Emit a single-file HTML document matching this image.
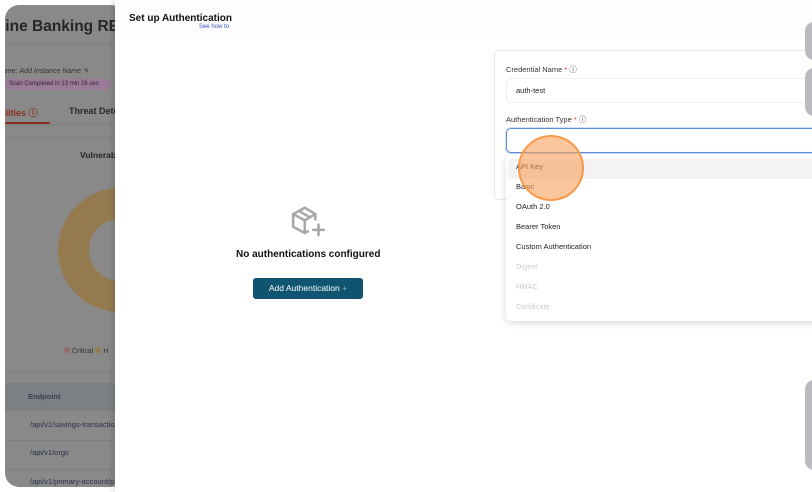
<!DOCTYPE html>
<html><head><style>
*{margin:0;padding:0;box-sizing:border-box}
body{width:812px;height:492px;background:#fff;position:relative;overflow:hidden;font-family:"Liberation Sans",sans-serif}
.a{position:absolute}
</style></head><body>
<div class="a" style="left:5px;top:5px;width:120px;height:482px;background:#898989;border-radius:14px;overflow:hidden">
  <div class="a" style="left:-4px;top:13px;font-size:15.5px;font-weight:bold;color:#262626;white-space:nowrap">line Banking RE</div>
  <div class="a" style="left:0;top:38px;width:120px;height:1px;background:#7e7e7e"></div>
  <div class="a" style="left:-3px;top:62px;font-size:7px;color:#333;white-space:nowrap">ame: <i>Add Instance Name ✎</i></div>
  <div class="a" style="left:0;top:74px;height:11px;width:106px;background:#9a7a98;border-radius:6px;font-size:6px;color:#2a2a2a;line-height:11px;padding-left:4px;white-space:nowrap">Scan Completed in 13 min 26 sec</div>
  <div class="a" style="left:-2px;top:101px;font-size:9px;font-weight:bold;color:#8a2f22;white-space:nowrap">ilities ⓘ</div>
  <div class="a" style="left:64px;top:101px;font-size:9px;font-weight:bold;color:#2a2a2a;white-space:nowrap">Threat Dete</div>
  <div class="a" style="left:0;top:117px;width:45px;height:2px;background:#8a2f22"></div>
  <div class="a" style="left:0;top:119px;width:120px;height:1px;background:#7e7e7e"></div>
  <div class="a" style="left:0;top:132px;width:120px;height:1px;background:#7e7e7e"></div>
  <div class="a" style="left:75px;top:145px;font-size:8.5px;font-weight:bold;color:#262626">Vulnerab</div>
  <div class="a" style="left:53px;top:183px;width:124px;height:124px;border-radius:50%;border:31px solid #957a4f"></div>
  <div class="a" style="left:59px;top:342px;font-size:7px;color:#333;white-space:nowrap"><span style="display:inline-block;width:6px;height:6px;border-radius:50%;background:#946a6a"></span> Critical <span style="display:inline-block;width:6px;height:6px;border-radius:50%;background:#957a4f"></span> H</div>
  <div class="a" style="left:0;top:367px;width:120px;height:1px;background:#7e7e7e"></div>
  <div class="a" style="left:0;top:378px;width:120px;height:28px;background:#7b8085"></div>
  <div class="a" style="left:23px;top:387px;font-size:7.5px;font-weight:bold;color:#3a4150">Endpoint</div>
  <div class="a" style="left:25px;top:415px;font-size:7.5px;color:#27304a;white-space:nowrap">/api/v1/savings-transactio</div>
  <div class="a" style="left:0;top:435px;width:120px;height:1px;background:#7e7e7e"></div>
  <div class="a" style="left:25px;top:443px;font-size:7.5px;color:#27304a">/api/v1/orgs</div>
  <div class="a" style="left:0;top:464px;width:120px;height:1px;background:#7e7e7e"></div>
  <div class="a" style="left:25px;top:472px;font-size:7.5px;color:#27304a;white-space:nowrap">/api/v1/primary-account/p</div>
</div>
<div class="a" style="left:115px;top:0;width:697px;height:492px;background:#fff;box-shadow:-2px 0 6px rgba(0,0,0,.15)">
  <div class="a" style="left:0;top:0;width:697px;height:36px;background:#fdfdfd"></div>
  <div class="a" style="left:14px;top:13px;font-size:10px;font-weight:bold;color:#111">Set up Authentication</div>
  <div class="a" style="left:84px;top:24px;font-size:6px;color:#3b55c9">See how to</div>
  <svg class="a" style="left:175px;top:204px" width="38" height="37" viewBox="0 0 36 34" fill="none" stroke="#a8a8a8" stroke-width="2.4" stroke-linejoin="round" stroke-linecap="round">
    <path d="M24 14V9L14 3 3 9v12l11 6 3-1.5"/><path d="M3 9l11 6 10-6"/><path d="M14 15v12"/><path d="M8.5 6l10 6"/><path d="M27 19v10M22 24h10"/>
  </svg>
  <div class="a" style="left:121px;top:249px;font-size:10px;font-weight:bold;color:#111;white-space:nowrap">No authentications configured</div>
  <div class="a" style="left:138px;top:278px;width:110px;height:21px;background:#0f5572;border-radius:3px;color:#fff;font-size:8.5px;line-height:21px;text-align:center">Add Authentication <span style="color:#9ab">+</span></div>
  <div class="a" style="left:379px;top:50px;width:330px;height:150px;border:1px solid #e6e6e6;border-radius:5px;background:#fff"></div>
  <div class="a" style="left:391px;top:64px;font-size:7.5px;color:#333">Credential Name <span style="color:#d33">*</span> ⓘ</div>
  <div class="a" style="left:391px;top:78px;width:320px;height:25px;border:1px solid #eee;border-radius:5px;font-size:7.5px;color:#222;line-height:23px;padding-left:9px">auth-test</div>
  <div class="a" style="left:391px;top:114px;font-size:7.5px;color:#333">Authentication Type <span style="color:#d33">*</span> ⓘ</div>
  <div class="a" style="left:391px;top:128px;width:320px;height:25px;border:1px solid #5b8fd6;border-radius:5px;box-shadow:0 0 0 1px #cfe0f5"></div>
  <div class="a" style="left:391px;top:155px;width:320px;height:166px;background:#fff;border-radius:5px;box-shadow:0 2px 8px rgba(0,0,0,.15)">
    <div style="margin:4px 2px 0;height:20px;background:#f3f3f3;border-radius:3px"></div>
  </div>
  <div class="a" style="left:401px;top:155px;font-size:7.5px;line-height:20px;color:#222">
    <div style="margin-top:2px">API Key</div><div>Basic</div><div>OAuth 2.0</div><div>Bearer Token</div><div>Custom Authentication</div>
    <div style="color:#ccc">Digest</div><div style="color:#ccc">HMAC</div><div style="color:#ccc">Certificate</div>
  </div>
  <div class="a" style="left:403px;top:135px;width:66px;height:66px;border-radius:50%;background:rgba(250,160,90,.6);border:2px solid #f59a4c"></div>
  <div class="a" style="left:690px;top:22px;width:20px;height:38px;border-radius:9px;background:#b9bbc1"></div>
  <div class="a" style="left:690px;top:68px;width:20px;height:48px;border-radius:9px;background:#b9bbc1"></div>
  <div class="a" style="left:690px;top:380px;width:20px;height:90px;border-radius:9px;background:#b9bbc1"></div>
</div>
</body></html>
